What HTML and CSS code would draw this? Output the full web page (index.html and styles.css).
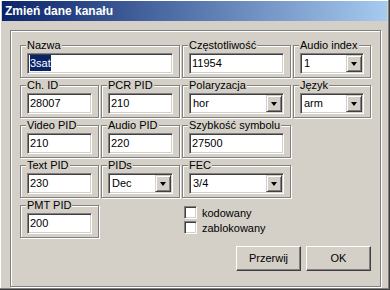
FILE: index.html
```html
<!DOCTYPE html>
<html>
<head>
  <meta charset="UTF-8">
  <title>Zmień dane kanału</title>
  <link rel="stylesheet" href="styles.css">
</head>
<body>
  <div class="window">
    <div class="titlebar">Zmień dane kanału</div>
    <div class="client">
      <div class="panel">
        <div class="form-grid">
          <fieldset class="g-naz">
            <legend>Nazwa</legend>
            <div class="field"><span class="sel">3sat</span></div>
          </fieldset>
          <fieldset class="g-cz">
            <legend>Częstotliwość</legend>
            <div class="field">11954</div>
          </fieldset>
          <fieldset class="g-ai">
            <legend>Audio index</legend>
            <div class="field select"><span class="val">1</span><span class="drop"><i class="arrow"></i></span></div>
          </fieldset>

          <fieldset>
            <legend>Ch. ID</legend>
            <div class="field">28007</div>
          </fieldset>
          <fieldset>
            <legend>PCR PID</legend>
            <div class="field">210</div>
          </fieldset>
          <fieldset>
            <legend>Polaryzacja</legend>
            <div class="field select"><span class="val">hor</span><span class="drop"><i class="arrow"></i></span></div>
          </fieldset>
          <fieldset>
            <legend>Język</legend>
            <div class="field select"><span class="val">arm</span><span class="drop"><i class="arrow"></i></span></div>
          </fieldset>

          <fieldset>
            <legend>Video PID</legend>
            <div class="field">210</div>
          </fieldset>
          <fieldset>
            <legend>Audio PID</legend>
            <div class="field">220</div>
          </fieldset>
          <fieldset>
            <legend>Szybkość symbolu</legend>
            <div class="field">27500</div>
          </fieldset>
          <div></div>

          <fieldset>
            <legend>Text PID</legend>
            <div class="field">230</div>
          </fieldset>
          <fieldset>
            <legend>PIDs</legend>
            <div class="field select"><span class="val">Dec</span><span class="drop"><i class="arrow"></i></span></div>
          </fieldset>
          <fieldset>
            <legend>FEC</legend>
            <div class="field select"><span class="val">3/4</span><span class="drop"><i class="arrow"></i></span></div>
          </fieldset>
          <div></div>

          <fieldset>
            <legend>PMT PID</legend>
            <div class="field">200</div>
          </fieldset>
          <div></div>
          <div class="checks">
            <label class="check"><span class="box"></span>kodowany</label>
            <label class="check"><span class="box"></span>zablokowany</label>
          </div>

          <div class="buttons">
            <div class="btn">Przerwij</div>
            <div class="btn">OK</div>
          </div>
        </div>
      </div>
    </div>
  </div>
</body>
</html>
```

FILE: styles.css
```css
body {
  margin: 0;
  background: #d4d0c8;
  font-family: "Liberation Sans", Arial, sans-serif;
  font-size: 11px;
  color: #000;
}
.window {
  width: 390px;
  height: 290px;
  box-sizing: border-box;
  background: #d4d0c8;
  border-right: 1px solid #404040;
  border-bottom: 1px solid #404040;
  box-shadow: inset -1px -1px #808080, inset 1px 1px #fff;
  padding: 1px 2px 0 2px;
  display: flex;
  flex-direction: column;
}
.titlebar {
  height: 20px;
  line-height: 20px;
  padding-left: 3px;
  background: linear-gradient(to right, #0a246a, #a6caf0);
  color: #fff;
  font-weight: bold;
  font-size: 12px;
}
.client {
  flex: 1;
  padding: 9px 6px 0 8px;
}
.panel {
  border: 1px solid #808080;
  box-shadow: inset 1px 1px #fff, 1px 1px #fff;
  padding: 8px 9px 8px 9px;
}
.form-grid {
  display: grid;
  grid-template-columns: 79px 79px 109px 78px;
  grid-auto-rows: 39px;
  column-gap: 2px;
  row-gap: 1px;
}
.g-naz {
  grid-column: span 2;
}
fieldset {
  margin: 0;
  min-width: 0;
  padding: 1px 6px 3px 6px;
  border: 1px solid #808080;
  box-shadow: inset 1px 1px #fff, 1px 1px #fff;
}
legend {
  padding: 0 1px;
  margin-left: -1px;
  line-height: 13px;
  background: #d4d0c8;
}
.field {
  height: 21px;
  box-sizing: border-box;
  background: #fff;
  border: 1px solid;
  border-color: #808080 #fff #fff #808080;
  box-shadow: inset 1px 1px #404040, inset -1px -1px #d4d0c8;
  padding: 0 2px;
  line-height: 19px;
  white-space: nowrap;
}
.sel {
  background: #0a246a;
  color: #fff;
  padding: 2px 0;
}
.field.select {
  display: flex;
  padding: 1px;
}
.select .val {
  flex: 1;
  padding-left: 2px;
  line-height: 17px;
}
.drop {
  width: 16px;
  height: 17px;
  box-sizing: border-box;
  background: #d4d0c8;
  border: 1px solid;
  border-color: #d4d0c8 #404040 #404040 #d4d0c8;
  box-shadow: inset 1px 1px #fff, inset -1px -1px #808080;
  display: flex;
  align-items: center;
  justify-content: center;
}
.arrow {
  width: 0;
  height: 0;
  border-left: 3.5px solid transparent;
  border-right: 3.5px solid transparent;
  border-top: 4px solid #000;
  margin-top: 1px;
}
.checks {
  grid-column: span 2;
  display: flex;
  flex-direction: column;
  gap: 2px;
  padding: 7px 0 0 2px;
}
.check {
  display: flex;
  align-items: center;
  gap: 5px;
  height: 13px;
}
.box {
  width: 13px;
  height: 13px;
  box-sizing: border-box;
  background: #fff;
  border: 1px solid;
  border-color: #808080 #fff #fff #808080;
  box-shadow: inset 1px 1px #404040, inset -1px -1px #d4d0c8;
}
.buttons {
  grid-column: 3 / span 2;
  display: flex;
  justify-content: flex-end;
  gap: 5px;
  padding-top: 7px;
}
.btn {
  width: 65px;
  height: 25px;
  box-sizing: border-box;
  background: #d4d0c8;
  border: 1px solid;
  border-color: #fff #404040 #404040 #fff;
  box-shadow: inset -1px -1px #808080, inset 1px 1px #d4d0c8;
  text-align: center;
  line-height: 23px;
}
```
